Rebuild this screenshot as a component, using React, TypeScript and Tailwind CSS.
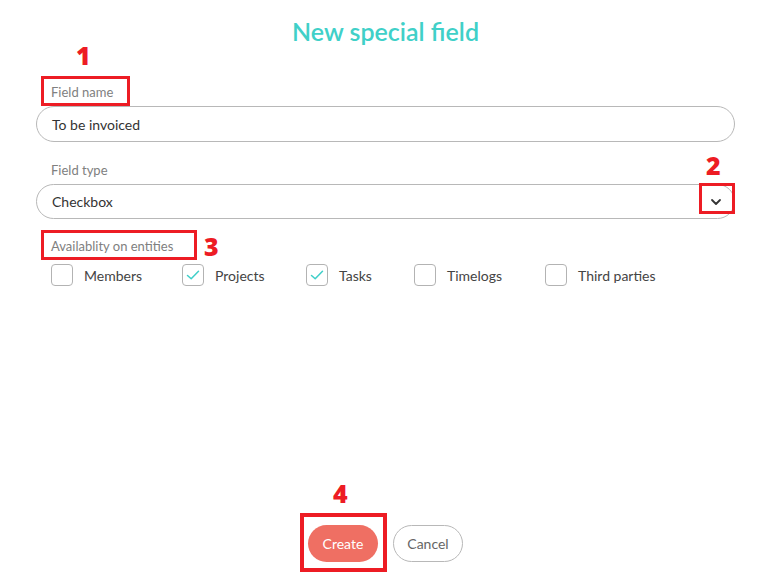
import React from "react";

const Check = () => (
  <svg width="16" height="16" viewBox="0 0 16 16" fill="none">
    <path d="M2.5 8.5 L6.2 11.8 L13.5 4.2" stroke="#3fcfc9" strokeWidth="1.5" strokeLinecap="round" strokeLinejoin="round" />
  </svg>
);

const Box = ({ checked, label }: { checked?: boolean; label: string }) => (
  <div className="flex items-center gap-[11px]">
    <div className="w-[22px] h-[22px] rounded-[4px] border border-[#b3b3b3] flex items-center justify-center">
      {checked && <Check />}
    </div>
    <span className="text-[14px] text-[#444]">{label}</span>
  </div>
);

export default function App() {
  return (
    <div
      className="relative w-[771px] h-[577px] bg-white overflow-hidden"
      style={{ fontFamily: "Lato, 'Noto Sans', sans-serif" }}
    >
      <div className="flex flex-col h-full">
        <h1 className="text-center text-[25px] font-semibold text-[#40d0c8] pt-[15px] leading-[32px]">
          New special field
        </h1>
        <div className="px-[36px] mt-[37px]">
          <div className="pl-[15px] text-[13px] text-[#808080] leading-[16px]">Field name</div>
          <div className="mt-[6px] h-[36px] rounded-full border border-[#b8b8b8] flex items-center pl-[15px] text-[14px] text-[#333]">
            To be invoiced
          </div>
          <div className="pl-[15px] mt-[20px] text-[13px] text-[#808080] leading-[16px]">Field type</div>
          <div className="mt-[6px] h-[35px] rounded-full border border-[#b8b8b8] flex items-center justify-between pl-[15px] pr-[10px] text-[14px] text-[#333]">
            <span>Checkbox</span>
            <svg width="14" height="14" viewBox="0 0 14 14" fill="none" className="mr-[1px]">
              <path d="M3 5 L7 9 L11 5" stroke="#333" strokeWidth="1.8" strokeLinecap="round" strokeLinejoin="round" />
            </svg>
          </div>
          <div className="pl-[15px] mt-[19px] text-[13px] text-[#808080] leading-[16px]">Availablity on entities</div>
          <div className="pl-[15px] mt-[10px] flex">
            <div className="w-[131px]"><Box label="Members" /></div>
            <div className="w-[124px]"><Box checked label="Projects" /></div>
            <div className="w-[108px]"><Box checked label="Tasks" /></div>
            <div className="w-[131px]"><Box label="Timelogs" /></div>
            <div><Box label="Third parties" /></div>
          </div>
        </div>
        <div className="mt-auto mb-[15px] flex justify-center gap-[15px]">
          <button className="h-[37px] w-[70px] rounded-full bg-[#ef6f63] text-white text-[14px]">Create</button>
          <button className="h-[37px] w-[70px] rounded-full border border-[#b8b8b8] text-[#666] text-[14px]">Cancel</button>
        </div>
      </div>

      {/* annotations */}
      <div className="absolute left-[41px] top-[76px] w-[89px] h-[30px] border-[3px] border-[#ed1c24]" />
      <div className="absolute left-[76px] top-[40px] text-[25px] font-extrabold text-[#ed1c24] leading-[30px]" style={{ fontFamily: "'Open Sans', sans-serif" }}>1</div>
      <div className="absolute left-[699px] top-[183px] w-[36px] h-[31px] border-[3px] border-[#ed1c24]" />
      <div className="absolute left-[706px] top-[150px] text-[25px] font-extrabold text-[#ed1c24] leading-[30px]" style={{ fontFamily: "'Open Sans', sans-serif" }}>2</div>
      <div className="absolute left-[41px] top-[230px] w-[156px] h-[30px] border-[3px] border-[#ed1c24]" />
      <div className="absolute left-[204px] top-[231px] text-[25px] font-extrabold text-[#ed1c24] leading-[30px]" style={{ fontFamily: "'Open Sans', sans-serif" }}>3</div>
      <div className="absolute left-[300px] top-[513px] w-[87px] h-[59px] border-[4px] border-[#ed1c24]" />
      <div className="absolute left-[333px] top-[478px] text-[25px] font-extrabold text-[#ed1c24] leading-[30px]" style={{ fontFamily: "'Open Sans', sans-serif" }}>4</div>
    </div>
  );
}
